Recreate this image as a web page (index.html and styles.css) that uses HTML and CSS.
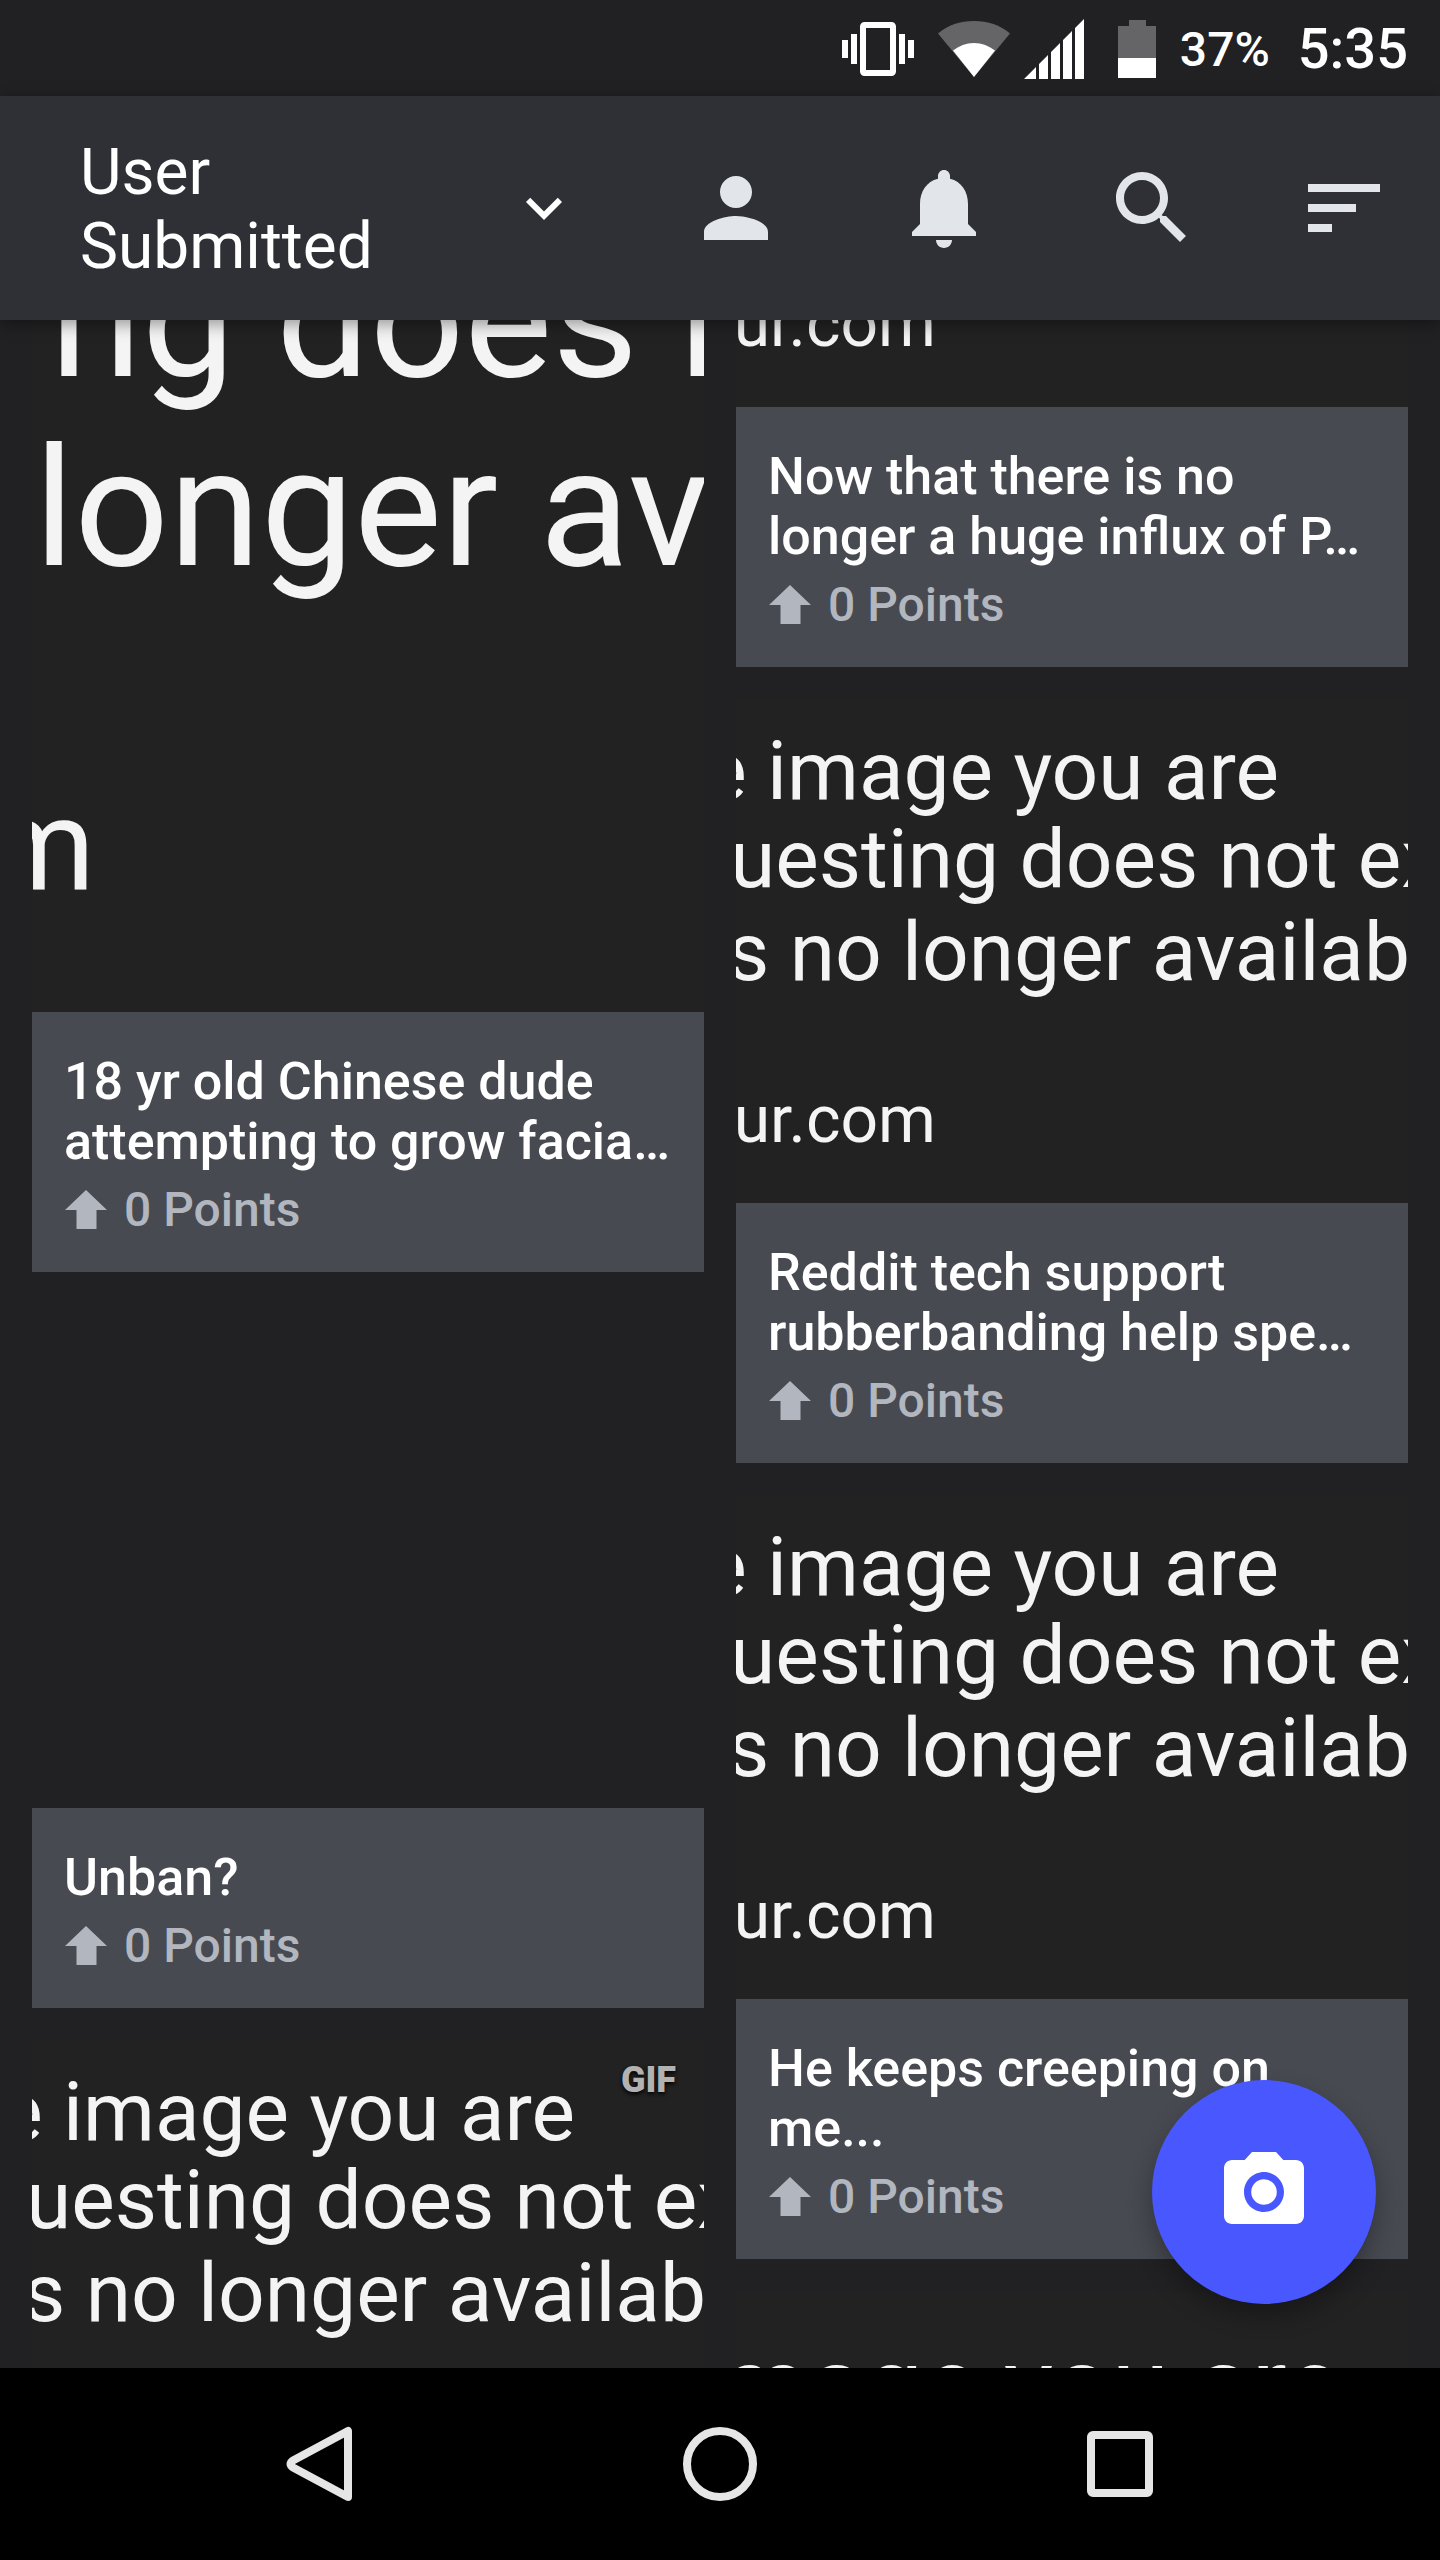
FILE: index.html
```html
<!DOCTYPE html>
<html lang="en">
<head>
    <meta charset="UTF-8">
    <meta name="viewport" content="width=device-width, initial-scale=1.0">
    <title>User Submitted</title>
    <link rel="stylesheet" href="styles.css">
</head>
<body>
    <div class="status-bar">
        <svg class="vibrate" viewBox="0 0 24 24"><path d="M0 15h2V9H0v6zm3 2h2V7H3v10zm19-8v6h2V9h-2zm-3 8h2V7h-2v10zM16.500 3h-9C6.670 3 6 3.670 6 4.500v15c0 .83.67 1.500 1.500 1.500h9c.83 0 1.500-.67 1.500-1.500v-15c0-.83-.67-1.500-1.500-1.500zM16 19H8V5h8v14z"/></svg>
        <div class="signals">
            <svg class="wifi" viewBox="0 0 72 60">
                <path class="dim" d="M36 58L0 14.500C10 6 22 2 36 2s26 4 36 12.500z"/>
                <path d="M36 58L15 31.500C21 27 28 24 36 24s15 3 21 7.500z"/>
            </svg>
            <svg class="cell" viewBox="0 0 60 60"><path d="M0 60h12V48zM15 60h9V36l-9 9zM27 60h9V24l-9 9zM39 60h9V12l-9 9zM51 60h9V0l-9 9z"/></svg>
        </div>
        <svg class="battery" viewBox="0 0 38 58">
            <path class="dim" d="M0 6h11V0h17v6h10v32H0z"/>
            <path d="M0 38h38v20H0z"/>
        </svg>
        <span class="percent">37%</span>
        <span class="clock">5:35</span>
    </div>

    <header class="toolbar">
        <button class="gallery-picker" aria-haspopup="listbox">
            <span>User<br>Submitted</span>
            <svg viewBox="0 0 24 24"><path d="M16.590 8.590L12 13.170 7.410 8.590 6 10l6 6 6-6z"/></svg>
        </button>
        <div class="actions">
            <button aria-label="Profile"><svg viewBox="0 0 24 24"><path d="M12 12c2.210 0 4-1.790 4-4s-1.790-4-4-4-4 1.790-4 4 1.790 4 4 4zm0 2c-2.670 0-8 1.340-8 4v2h16v-2c0-2.660-5.330-4-8-4z"/></svg></button>
            <button aria-label="Notifications"><svg viewBox="0 0 24 24"><path d="M12 22c1.100 0 2-.9 2-2h-4c0 1.100.89 2 2 2zm6-6v-5c0-3.070-1.640-5.640-4.500-6.320V4c0-.83-.67-1.500-1.500-1.500s-1.500.67-1.500 1.500v.68C7.630 5.360 6 7.920 6 11v5l-2 2v1h16v-1l-2-2z"/></svg></button>
            <button aria-label="Search"><svg viewBox="0 0 24 24"><path d="M15.500 14h-.79l-.28-.27C15.410 12.590 16 11.110 16 9.500 16 5.910 13.090 3 9.500 3S3 5.910 3 9.500 5.910 16 9.500 16c1.610 0 3.090-.59 4.230-1.570l.27.28v.79l5 4.990L20.490 19l-4.990-5zm-6 0C7.010 14 5 11.990 5 9.500S7.010 5 9.500 5 14 7.010 14 9.500 11.990 14 9.500 14z"/></svg></button>
            <button class="sort" aria-label="Sort"><svg viewBox="0 0 24 24"><path d="M3 18h6v-2H3v2zM3 6v2h18V6H3zm0 7h12v-2H3v2z"/></svg></button>
        </div>
    </header>

    <main class="feed">
        <div class="column">
            <article class="card">
                <svg class="thumb" viewBox="0 0 672 692">
                    <g class="huge">
                        <text x="18" y="56">ng does n</text>
                        <text x="2" y="245">longer av</text>
                    </g>
                    <text class="large" x="63" y="570" text-anchor="end">imgur.com</text>
                </svg>
                <div class="caption">
                    <h2>18 yr old Chinese dude attempting to grow facia…</h2>
                    <p class="points"><svg viewBox="0 0 42 40"><path d="M21 0L42 20H31.500V39H11.500V20H0z"/></svg>0 Points</p>
                </div>
            </article>
            <article class="card">
                <div class="thumb thumb-empty"></div>
                <div class="caption">
                    <h2>Unban?</h2>
                    <p class="points"><svg viewBox="0 0 42 40"><path d="M21 0L42 20H31.500V39H11.500V20H0z"/></svg>0 Points</p>
                </div>
            </article>
            <article class="card">
                <svg class="thumb" viewBox="0 0 672 504">
                    <text x="543" y="100" text-anchor="end">e image you are</text>
                    <text x="706" y="188" text-anchor="end">uesting does not ex</text>
                    <text x="674" y="281" text-anchor="end">s no longer availab</text>
                    <text class="small" x="200" y="443" text-anchor="end">ur.com</text>
                </svg>
                <span class="badge">GIF</span>
            </article>
        </div>

        <div class="column">
            <article class="card">
                <svg class="thumb" viewBox="0 0 672 87">
                    <text class="small" x="200" y="26" text-anchor="end">ur.com</text>
                </svg>
                <div class="caption">
                    <h2>Now that there is no longer a huge influx of P…</h2>
                    <p class="points"><svg viewBox="0 0 42 40"><path d="M21 0L42 20H31.500V39H11.500V20H0z"/></svg>0 Points</p>
                </div>
            </article>
            <article class="card">
                <svg class="thumb" viewBox="0 0 672 504">
                    <text x="543" y="100" text-anchor="end">e image you are</text>
                    <text x="706" y="188" text-anchor="end">uesting does not ex</text>
                    <text x="674" y="281" text-anchor="end">s no longer availab</text>
                    <text class="small" x="200" y="443" text-anchor="end">ur.com</text>
                </svg>
                <div class="caption">
                    <h2>Reddit tech support rubberbanding help spe…</h2>
                    <p class="points"><svg viewBox="0 0 42 40"><path d="M21 0L42 20H31.500V39H11.500V20H0z"/></svg>0 Points</p>
                </div>
            </article>
            <article class="card">
                <svg class="thumb" viewBox="0 0 672 504">
                    <text x="543" y="100" text-anchor="end">e image you are</text>
                    <text x="706" y="188" text-anchor="end">uesting does not ex</text>
                    <text x="674" y="281" text-anchor="end">s no longer availab</text>
                    <text class="small" x="200" y="443" text-anchor="end">ur.com</text>
                </svg>
                <div class="caption">
                    <h2>He keeps creeping on me...</h2>
                    <p class="points"><svg viewBox="0 0 42 40"><path d="M21 0L42 20H31.500V39H11.500V20H0z"/></svg>0 Points</p>
                </div>
            </article>
            <article class="card">
                <svg class="thumb" viewBox="0 0 672 504">
                    <text class="medium" x="605" y="130" text-anchor="end">image you are</text>
                </svg>
            </article>
        </div>

        <button class="upload" aria-label="Upload"><svg viewBox="0 0 24 24"><circle cx="12" cy="12" r="3.200"/><path d="M9 2L7.170 4H4c-1.100 0-2 .9-2 2v12c0 1.100.9 2 2 2h16c1.100 0 2-.9 2-2V6c0-1.100-.9-2-2-2h-3.170L15 2H9zm3 15c-2.760 0-5-2.240-5-5s2.240-5 5-5 5 2.240 5 5-2.240 5-5 5z"/></svg></button>
    </main>

    <nav class="nav-bar">
        <button aria-label="Back"><svg viewBox="0 0 80 80"><path d="M68 7V73L13 43.500Q8 40 13 36.500z"/></svg></button>
        <button aria-label="Home"><svg viewBox="0 0 80 80"><circle cx="40" cy="40" r="33"/></svg></button>
        <button aria-label="Overview"><svg viewBox="0 0 80 80"><rect x="11" y="11" width="58" height="58" rx="2"/></svg></button>
    </nav>
</body>
</html>
```

FILE: styles.css
```css
* {
    box-sizing: border-box;
}
body {
    margin: 0;
    height: 100vh;
    display: flex;
    flex-direction: column;
    background-color: #212123;
    color: #fff;
    font-family: Roboto, sans-serif;
}
button {
    padding: 0;
    border: none;
    background: none;
    color: inherit;
    font: inherit;
    cursor: pointer;
}
svg {
    display: block;
    fill: currentColor;
}

/* status bar */
.status-bar {
    height: 96px;
    flex-shrink: 0;
    padding: 2px 32px 0;
    display: flex;
    justify-content: flex-end;
    align-items: center;
    gap: 24px;
    font-weight: 500;
}
.signals {
    display: flex;
    align-items: center;
    gap: 14px;
}
.vibrate {
    width: 72px;
    height: 72px;
}
.wifi {
    width: 72px;
    height: 60px;
}
.cell {
    width: 60px;
    height: 60px;
}
.battery {
    width: 38px;
    height: 58px;
    margin-left: 10px;
}
.dim {
    fill: #656567;
}
.percent {
    font-size: 48px;
}
.clock {
    font-size: 56px;
    margin-left: 4px;
}

/* toolbar */
.toolbar {
    height: 224px;
    flex-shrink: 0;
    padding: 0 48px 0 80px;
    display: flex;
    justify-content: space-between;
    align-items: center;
    background-color: #2f3035;
    box-shadow: 0 4px 16px rgba(0, 0, 0, 0.4);
    position: relative;
    z-index: 1;
}
.gallery-picker {
    flex: 0 1 500px;
    display: flex;
    justify-content: space-between;
    align-items: center;
    text-align: left;
    font-size: 64px;
    line-height: 74px;
}
.gallery-picker span {
    padding-top: 4px;
}
.gallery-picker svg {
    width: 72px;
    height: 72px;
}
.actions {
    display: flex;
    gap: 112px;
    color: #e2e5ea;
}
.actions svg {
    width: 96px;
    height: 96px;
}
.actions .sort {
    margin-left: -16px;
}

/* feed */
.feed {
    flex: 1;
    min-height: 0;
    padding: 0 32px;
    display: grid;
    grid-template-columns: 1fr 1fr;
    gap: 32px;
    overflow: hidden;
    position: relative;
}
.column {
    display: flex;
    flex-direction: column;
    gap: 32px;
    min-width: 0;
    height: 0;
}
.card {
    position: relative;
}
.thumb {
    width: 100%;
    overflow: hidden;
    background-color: #222;
    fill: #f4f4f4;
    font-size: 82px;
}
.thumb-empty {
    aspect-ratio: 4 / 3;
    background-color: #212123;
}
.thumb .huge {
    font-size: 166px;
}
.thumb .large {
    font-size: 128px;
}
.thumb .medium {
    font-size: 104px;
}
.thumb .small {
    font-size: 66px;
}
.caption {
    padding: 40px 32px 34px;
    background-color: #474a51;
}
.caption h2 {
    margin: 0 0 10px;
    font-size: 52px;
    font-weight: 500;
    line-height: 60px;
}
.points {
    margin: 0;
    display: flex;
    align-items: center;
    gap: 16px;
    color: #b2b6bf;
    font-size: 48px;
    font-weight: 500;
    line-height: 56px;
}
.points svg {
    width: 44px;
    height: 40px;
}
.badge {
    position: absolute;
    top: 20px;
    right: 28px;
    color: #b2b2b2;
    font-size: 36px;
    font-weight: 900;
    line-height: 40px;
    text-shadow: 0 2px 4px #000;
}

/* floating upload button */
.upload {
    position: absolute;
    right: 64px;
    bottom: 64px;
    width: 224px;
    height: 224px;
    display: flex;
    justify-content: center;
    align-items: center;
    border-radius: 50%;
    background-color: #4958fe;
    box-shadow: 0 12px 24px rgba(0, 0, 0, 0.3);
}
.upload svg {
    width: 96px;
    height: 96px;
}

/* system navigation */
.nav-bar {
    height: 192px;
    flex-shrink: 0;
    padding: 0 120px;
    display: flex;
    background-color: #000;
    color: #e6e6e6;
}
.nav-bar button {
    flex: 1;
    display: flex;
    justify-content: center;
    align-items: center;
}
.nav-bar svg {
    width: 80px;
    height: 80px;
    fill: none;
    stroke: currentColor;
    stroke-width: 8px;
    stroke-linejoin: round;
}
```
